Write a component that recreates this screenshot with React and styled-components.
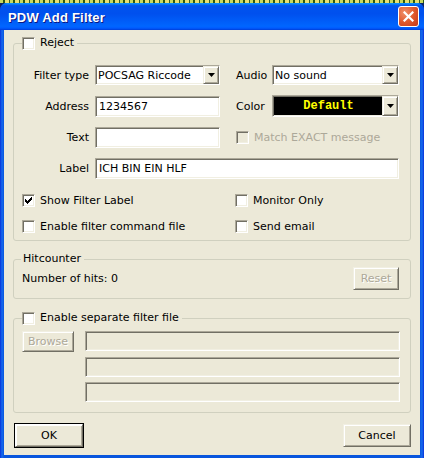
import React from "react";
import styled, { createGlobalStyle, css } from "styled-components";

const Global = createGlobalStyle`
  html, body { margin: 0; padding: 0; }
  body {
    width: 424px; height: 458px; overflow: hidden;
    background: #0a246a;
    font-family: "DejaVu Sans", Tahoma, sans-serif;
    font-size: 11px;
    color: #000;
  }
`;

const Screen = styled.div`
  width: 424px;
  height: 458px;
  display: flex;
  flex-direction: column;
`;

const DesktopStrip = styled.div`
  height: 3px;
  flex: none;
  background: repeating-linear-gradient(90deg, #c8d860 0 3px, #2a5a10 3px 5px, #e8e070 5px 9px, #406020 9px 10px);
`;

const Window = styled.div`
  flex: 1;
  display: flex;
  flex-direction: column;
  background: linear-gradient(90deg, #0831d9 0, #166aee 2px, #0855dd 4px, #0855dd calc(100% - 4px), #166aee calc(100% - 2px), #0831d9 100%);
  border-radius: 7px 7px 0 0;
  padding: 0 4px 3px 4px;
`;

const TitleBar = styled.div`
  height: 27px;
  margin: 0 -4px;
  padding: 0 5px 0 8px;
  display: flex;
  align-items: center;
  justify-content: space-between;
  border-radius: 7px 7px 0 0;
  background: linear-gradient(180deg, #0997ff 0%, #0053ee 10%, #0050ee 40%, #0066ff 86%, #005bff 93%, #003dd7 100%);
`;

const Title = styled.span`
  color: #fff;
  font-family: "Liberation Sans", Arial, sans-serif;
  font-weight: bold;
  font-size: 13px;
  letter-spacing: 0.2px;
  text-shadow: 1px 1px 0 #0a1883;
  padding-top: 1px;
`;

const CloseButton = styled.div`
  width: 21px;
  height: 21px;
  box-sizing: border-box;
  border: 1px solid #fff;
  border-radius: 3px;
  background: radial-gradient(circle at 30% 30%, #f0906a 0%, #e05a2e 50%, #c4391a 100%);
  display: flex;
  align-items: center;
  justify-content: center;
`;

const Client = styled.div`
  flex: 1;
  background: #ece9d8;
  padding: 6px 9px 0 9px;
  display: flex;
  flex-direction: column;
`;

const Group = styled.fieldset`
  margin: 0;
  padding: 0;
  border: 1px solid #d0d0bf;
  border-radius: 3px;
  min-width: 0;
  box-sizing: border-box;
  height: ${(p) => p.$h}px;
  margin-bottom: ${(p) => p.$mb || 0}px;
`;

const Legend = styled.legend`
  padding: 0 3px 0 ${(p) => (p.$box ? "0" : "2px")};
  margin-left: ${(p) => (p.$box ? "8px" : "7px")};
  display: flex;
  align-items: center;
  gap: 5px;
  line-height: 14px;
`;

const sunken = css`
  box-sizing: border-box;
  border-style: solid;
  border-width: 1px;
  border-color: #aca899 #fff #fff #aca899;
  box-shadow: inset 1px 1px 0 #716f64, inset -1px -1px 0 #f1efe2;
`;

const Box = styled.span`
  ${sunken};
  width: 13px;
  height: 13px;
  flex: none;
  background: ${(p) => (p.$disabled ? "#ece9d8" : "#fff")};
  display: inline-flex;
  align-items: center;
  justify-content: center;
`;

const Check = ({ checked, disabled }) => (
  <Box $disabled={disabled}>
    {checked && (
      <svg width="7" height="7" viewBox="0 0 7 7">
        <path d="M0 2h1v1h1v1h1V3h1V2h1V1h1V0h1v3H6v1H5v1H4v1H3v1H2V6H1V5H0z" fill="#000" />
      </svg>
    )}
  </Box>
);

const CheckRow = styled.label`
  display: flex;
  align-items: center;
  gap: 5px;
  color: ${(p) => (p.$disabled ? "#aca899" : "#000")};
  white-space: nowrap;
  grid-column: ${(p) => p.$span || "auto"};
  margin-left: ${(p) => p.$indent || 0}px;
`;

const Form = styled.div`
  display: grid;
  grid-template-columns: 75px 125px 40px 127px;
  column-gap: 6px;
  row-gap: 10px;
  padding: 15px 0 0 0;
  align-items: center;
`;

const FieldLabel = styled.span`
  text-align: ${(p) => (p.$left ? "left" : "right")};
  margin-left: ${(p) => (p.$left ? "10px" : "0")};
  white-space: nowrap;
`;

const TextBox = styled.div`
  ${sunken};
  height: ${(p) => p.$h || 21}px;
  background: ${(p) => (p.$disabled ? "#ece9d8" : "#fff")};
  padding: 0 3px;
  display: flex;
  align-items: center;
  grid-column: ${(p) => p.$span || "auto"};
  white-space: nowrap;
  overflow: hidden;
`;

const SelectBox = styled.div`
  ${sunken};
  height: ${(p) => p.$h || 20}px;
  background: ${(p) => p.$bg || "#fff"};
  display: flex;
  align-items: stretch;
`;

const SelectValue = styled.div`
  flex: 1;
  display: flex;
  align-items: center;
  justify-content: ${(p) => (p.$center ? "center" : "flex-start")};
  padding-left: 2px;
  color: ${(p) => p.$color || "#000"};
  font-family: ${(p) => (p.$mono ? '"Liberation Mono", "DejaVu Sans Mono", monospace' : "inherit")};
  font-weight: ${(p) => (p.$mono ? "bold" : "normal")};
  font-size: ${(p) => (p.$mono ? "12px" : "11px")};
  white-space: nowrap;
`;

const raised = css`
  box-sizing: border-box;
  border-style: solid;
  border-width: 1px;
  border-color: #f1efe2 #716f64 #716f64 #f1efe2;
  box-shadow: inset 1px 1px 0 #fff, inset -1px -1px 0 #aca899;
  background: #ece9d8;
`;

const ArrowButton = styled.div`
  ${raised};
  width: 16px;
  flex: none;
  display: flex;
  align-items: center;
  justify-content: center;
`;

const Arrow = () => (
  <ArrowButton>
    <svg width="7" height="4" viewBox="0 0 7 4">
      <path d="M0 0h7L3.5 4z" fill="#000" />
    </svg>
  </ArrowButton>
);

const Select = ({ value, bg, color, mono, center, h }) => (
  <SelectBox $bg={bg} $h={h}>
    <SelectValue $color={color} $mono={mono} $center={center}>
      {value}
    </SelectValue>
    <Arrow />
  </SelectBox>
);

const Options = styled.div`
  display: grid;
  grid-template-columns: 213px auto;
  row-gap: 13px;
  padding: 15px 0 0 8px;
`;

const HitRow = styled.div`
  display: flex;
  align-items: center;
  justify-content: space-between;
  padding: 1px 11px 0 8px;
`;

const Button = styled.div`
  ${raised};
  width: ${(p) => p.$w}px;
  height: ${(p) => p.$h || 23}px;
  display: flex;
  align-items: center;
  justify-content: center;
  color: ${(p) => (p.$disabled ? "#aca899" : "#000")};
  text-shadow: ${(p) => (p.$disabled ? "1px 1px 0 #fff" : "none")};
  ${(p) =>
    p.$default &&
    css`
      outline: 1px solid #000;
      outline-offset: 0;
      border-color: #fff #716f64 #716f64 #fff;
    `}
`;

const FileArea = styled.div`
  display: grid;
  grid-template-columns: 52px 315px;
  column-gap: 11px;
  row-gap: 5px;
  padding: 6px 0 0 8px;
`;

const Footer = styled.div`
  display: flex;
  justify-content: space-between;
  padding: 11px 0 0 2px;
`;

export default function App() {
  return (
    <Screen>
      <Global />
      <DesktopStrip />
      <Window>
        <TitleBar>
          <Title>PDW Add Filter</Title>
          <CloseButton>
            <svg width="11" height="11" viewBox="0 0 11 11">
              <path d="M1.5 1.5l8 8M9.5 1.5l-8 8" stroke="#fff" strokeWidth="2.2" strokeLinecap="square" />
            </svg>
          </CloseButton>
        </TitleBar>
        <Client>
          <Group $h={205} $mb={11}>
            <Legend $box>
              <Check />
              <span>Reject</span>
            </Legend>
            <Form>
              <FieldLabel>Filter type</FieldLabel>
              <Select value="POCSAG Riccode" />
              <FieldLabel $left>Audio</FieldLabel>
              <Select value="No sound" />

              <FieldLabel>Address</FieldLabel>
              <TextBox>1234567</TextBox>
              <FieldLabel $left>Color</FieldLabel>
              <Select value="Default" bg="#000" color="#ffff00" mono center h={22} />

              <FieldLabel>Text</FieldLabel>
              <TextBox />
              <CheckRow $disabled $span="3 / 5" $indent={10}>
                <Check disabled />
                <span>Match EXACT message</span>
              </CheckRow>

              <FieldLabel>Label</FieldLabel>
              <TextBox $span="2 / 5">ICH BIN EIN HLF</TextBox>
            </Form>
            <Options>
              <CheckRow>
                <Check checked />
                <span>Show Filter Label</span>
              </CheckRow>
              <CheckRow>
                <Check />
                <span>Monitor Only</span>
              </CheckRow>
              <CheckRow>
                <Check />
                <span>Enable filter command file</span>
              </CheckRow>
              <CheckRow>
                <Check />
                <span>Send email</span>
              </CheckRow>
            </Options>
          </Group>

          <Group $h={47} $mb={12}>
            <Legend>Hitcounter</Legend>
            <HitRow>
              <span>Number of hits: 0</span>
              <Button $w={46} $disabled>Reset</Button>
            </HitRow>
          </Group>

          <Group $h={102}>
            <Legend $box>
              <Check />
              <span>Enable separate filter file</span>
            </Legend>
            <FileArea>
              <Button $w={52} $h={21} $disabled>Browse</Button>
              <TextBox $disabled $h={20} />
              <span />
              <TextBox $disabled $h={20} />
              <span />
              <TextBox $disabled $h={20} />
            </FileArea>
          </Group>

          <Footer>
            <Button $w={68} $default>OK</Button>
            <Button $w={68}>Cancel</Button>
          </Footer>
        </Client>
      </Window>
    </Screen>
  );
}
